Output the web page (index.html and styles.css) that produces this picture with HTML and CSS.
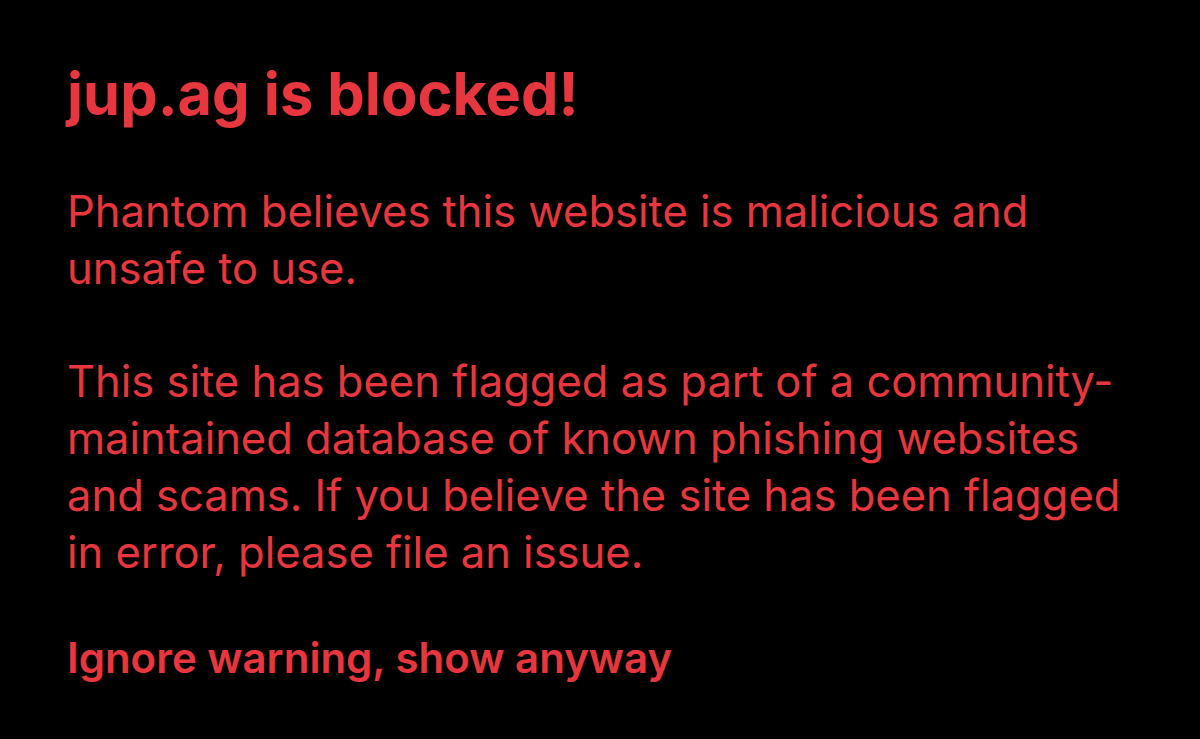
FILE: index.html
```html
<!DOCTYPE html>
<html lang="en">
<head>
<meta charset="utf-8">
<title>jup.ag is blocked!</title>
<link rel="stylesheet" href="styles.css">
</head>
<body>
<main class="warning">
  <h1 class="warning-title">jup.ag is blocked!</h1>
  <p class="warning-text">Phantom believes this website is malicious and unsafe to use.</p>
  <p class="warning-text">This site has been flagged as part of a community-maintained database of known phishing websites and scams. If you believe the site has been flagged in error, please file an issue.</p>
  <a class="warning-link" href="#">Ignore warning, show anyway</a>
</main>
</body>
</html>
```
FILE: styles.css
```css
html, body {
  margin: 0;
  padding: 0;
  background: #000;
  height: 100%;
}
body {
  font-family: Inter, "Liberation Sans", sans-serif;
  color: #e8363f;
}
.warning {
  padding: 57px 48px 0 67px;
  display: flex;
  flex-direction: column;
  align-items: flex-start;
}
.warning-title {
  font-size: 59.5px;
  font-weight: 700;
  line-height: 72px;
  margin: 0 0 54px;
}
.warning-text {
  max-width: 1085px;
  font-size: 43.5px;
  font-weight: 400;
  line-height: 57px;
  margin: 0 0 56px;
}
.warning-text:last-of-type {
  margin-bottom: 48px;
}
.warning-link {
  font-size: 42px;
  font-weight: 600;
  line-height: 57px;
  color: #e8363f;
  text-decoration: none;
}
```
